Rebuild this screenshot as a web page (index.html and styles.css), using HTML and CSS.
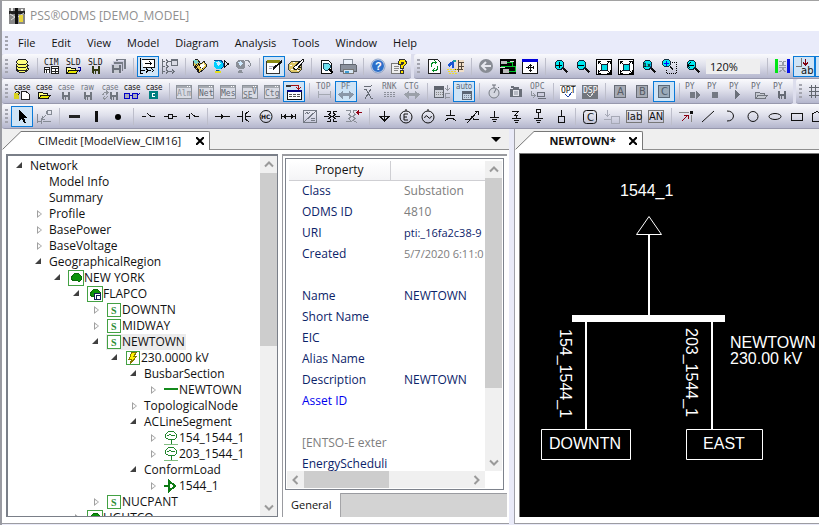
FILE: index.html
```html
<!DOCTYPE html>
<html lang="en">
<head>
<meta charset="utf-8">
<title>PSS®ODMS [DEMO_MODEL]</title>
<link rel="stylesheet" href="styles.css">
</head>
<body>
<svg class="sprite" aria-hidden="true">
  <symbol id="floppy" viewBox="0 0 8 8"><path d="M0 0H8V8H1L0 7Z" fill="currentColor"/><path d="M2 0H6V3H2Z" fill="#dfe0ea"/><path d="M2 5H6V8H2Z" fill="#c8c9d6"/><path d="M3 5H4V8H3Z" fill="currentColor"/></symbol>
  <symbol id="folder" viewBox="0 0 13 8"><path d="M.5 7V1.500H4.500L5.500 2.500H9.500V4" fill="#ffff80" stroke="currentColor"/><path d="M.5 7.500L3 4.500H12.500L10 7.500Z" fill="#e6e600" stroke="currentColor"/></symbol>
  <symbol id="folder-off" viewBox="0 0 13 8"><path d="M.5 7V1.500H4.500L5.500 2.500H9.500V4M.5 7.500L3 4.500H12.500L10 7.500Z" fill="#c4c8d0" stroke="#70757e"/></symbol>
  <symbol id="win" viewBox="0 0 16 14"><path d="M.5.5H15.500V13.500H.5Z" fill="#d9dbe4" stroke="#8e939b"/><path d="M1 1H15V3H1Z" fill="#a5a9b0"/><path d="M11 1h1v1h-1zM13 1h1v1h-1z" fill="#fff"/></symbol>
  <symbol id="lens" viewBox="0 0 13 14"><path d="M3.500 1.500H7.500L9.500 3.500V7.500L7.500 9.500H3.500L1.500 7.500V3.500Z" fill="#00e8f0" stroke="#123"/><path d="M9 9L12.500 12.500" stroke="#111" stroke-width="2"/></symbol>
  <symbol id="globe" viewBox="0 0 17 15"><path d="M3 1H8L10 3V8L8 10H3L1 8V3Z" fill="currentColor"/><path d="M3 3L6 2L8 5L5 7Z" fill="#cfeaff"/><path d="M4 11H7L8 14H3Z" fill="currentColor"/></symbol>
  <symbol id="fit" viewBox="0 0 16 16"><path d="M.5.5H15.500V15.500H.5Z" fill="#fff" stroke="#000"/><path d="M5 5H11V11H5Z" fill="#00dce6" stroke="#123"/><path d="M2 5V2H5M2 2L5 5M11 2H14V5M14 2L11 5M2 11V14H5M2 14L5 11M11 14H14V11M14 14L11 11" stroke="#000"/></symbol>
  <symbol id="line" viewBox="0 0 14 14"><path d="M0 13.500H14" stroke="#82bd82" stroke-width="2"/><path d="M4.500.5H9.500L12.500 3.500V6.500L10.500 8.500H4.500L1.500 6.500V3.500ZM7 9V13M3 5L6 3.500L8 5L11 4" fill="none" stroke="#20852b"/></symbol>
</svg>
<div class="app">
  <header class="titlebar">
    <svg class="logo" viewBox="0 0 16 16" aria-hidden="true"><path d="M0 0H16V16H0Z" fill="#898989"/><path d="M0 3H16V6H0Z" fill="#222"/><path d="M6 0H9V16H6Z" fill="#111"/><path d="M1 6L6 9M9 9L15 5M2 12L6 9" stroke="#ddd" fill="none"/><path d="M10 7H14V14H10Z" fill="#e8d53b"/><path d="M2 0H4V3H2ZM12 1H14V3H12Z" fill="#eee"/></svg>
    <span>PSS®ODMS [DEMO_MODEL]</span>
  </header>
  <nav class="menubar" aria-label="Main menu">
    <i class="grip"></i>
    <button>File</button><button>Edit</button><button>View</button><button>Model</button><button>Diagram</button><button>Analysis</button><button>Tools</button><button>Window</button><button>Help</button>
  </nav>

  <div class="toolrow">
    <div class="toolbar" role="toolbar" aria-label="Standard">
      <i class="grip"></i>
      <button aria-label="Database"><svg><path d="M5 12V14L8 16H14L17 14V12ZM5 9V10L8 12H14L17 10V9Z" fill="#ffff66" stroke="#222"/><ellipse cx="11" cy="12" rx="5.500" ry="2.500" fill="#ffff66" stroke="#222"/><ellipse cx="11" cy="9" rx="5.500" ry="2.500" fill="#ffff66" stroke="#222"/><ellipse cx="11" cy="6" rx="5.500" ry="2.500" fill="#ffff80" stroke="#222"/></svg></button>
      <i class="sep"></i>
      <button aria-label="CIM"><svg><text class="t8" x="3" y="9">CIM</text><path d="M3.500 17V11.500H8.500V17M10.500 17.500V10.500H17.500V17.500ZM10 12.500H17M10 15.500H17M14.500 13V17M4 13.500H8M5.500 14V17" fill="#fff" stroke="#222"/></svg></button>
      <button aria-label="Open SLD"><svg><text class="t8" x="3" y="9">SLD</text><use href="#folder" x="3" y="10" width="13" height="8"/><path d="M15 11H17.500V15M16 16L17.500 14" stroke="#00009a"/></svg></button>
      <button aria-label="Save SLD"><svg><text class="t8" x="3" y="9">SLD</text><g color="#333a12"><use href="#floppy" x="7" y="10" width="8" height="8"/></g></svg></button>
      <button aria-label="Save all" disabled><svg><path d="M9 3H19V13H9Z" fill="#777c86"/><path d="M11 4H17V5H11Z" fill="#dde"/><path d="M6.500 5.500H16.500V15.500H6.500Z" fill="#777c86" stroke="#ccd"/><path d="M4.500 8.500H14.500V17.500H4.500Z" fill="#6b707a" stroke="#ccd"/><path d="M7 9H12V12H7ZM7 14H12V17H7Z" fill="#c5c8d0"/></svg></button>
      <i class="sep"></i>
      <button class="on" aria-label="Model view"><svg><path d="M5 3.500H17.500V11.500H6" fill="#fff" stroke="#111"/><path d="M3.500 2V18" stroke="#000" stroke-width="1"/><path d="M8 7.500H14M12.500 5.500L14.500 7.500L12.500 9.500M4 14.500H8M9 12.500L11 14.500L9 16.500M12 14.500H14M14.500 12.500L16.500 14.500L14.500 16.500M4 17.500H6" stroke="#000"/></svg></button>
      <button aria-label="Model list" disabled><svg><path d="M12.500 3.500H18.500V9.500H12.500Z" fill="#d9dae4" stroke="#6b707a"/><path d="M3.500 3V18M4 5.500H6M7 3.500L9 5.500L7 7.500M9 5.500H12M4 10.500H6M7 8.500L9 10.500L7 12.500M4 15.500H6M7 13.500L9 15.500L7 17.500M10 15.500H13M13 13.500L15 15.500L13 17.500M12 4.500H18" stroke="#6b707a"/></svg></button>
      <i class="sep"></i>
      <button aria-label="Validate"><svg><path d="M4 5L8 3L12 8L15 5L18 10L14 14L10 17L5 10Z" fill="#e6c84e" stroke="#222"/><path d="M5 5L9 10M8 5L12 12M12 8L14 13M6 9L10 15" stroke="#111"/><path d="M4 4L8 4L10 7L6 8Z" fill="#79d5cb"/><path d="M11 9L15 7L16 10L12 13Z" fill="#fff"/></svg></button>
      <button aria-label="Locate"><svg color="#00cfff"><use href="#globe" x="2" y="3" width="17" height="15"/><path d="M3 4H10L12 7V11L10 13M5 14H8" stroke="#064a90"/><path d="M4 15H10V17H4Z" fill="#e3df20"/><path d="M13.500 5V11L17.500 8Z" stroke="#111"/></svg></button>
      <button aria-label="Relocate" disabled><svg color="#8a8f98"><use href="#globe" x="2" y="3" width="17" height="15"/><path d="M12 4H15L17 7V10M15 9L17 11" stroke="#858a93"/></svg></button>
      <i class="sep"></i>
      <button class="on" aria-label="Edit"><svg><path d="M3.500 5.500H16.500V17.500H3.500Z" fill="#fff" stroke="#333"/><path d="M4 4H17V7H4Z" fill="#8b8b12"/><path d="M10 13L19 5" stroke="#111" stroke-width="2"/><path d="M6 10.500H11M6 12.500H9" stroke="#aab"/></svg></button>
      <button aria-label="Palette"><svg><ellipse cx="10" cy="11" rx="7" ry="6" fill="#dfc765" stroke="#443"/><path d="M8 12L18 3L19 5L11 14Z" fill="#fff" stroke="#111"/><path d="M5 9H7V10H5ZM6 13H8V14H6ZM12 14H14V15H12ZM8 6H10V7H8Z" fill="#fff"/><path d="M13 11H16M13 13H15" stroke="#222"/></svg></button>
      <i class="sep"></i>
      <button aria-label="Print preview"><svg><path d="M6.500 4.500H13.500L16.500 7.500V17.500H6.500Z" fill="#fff" stroke="#111"/><path d="M9 7H13L15 9V12L13 14H10L8 12V9Z" fill="#6ee0ee" stroke="#174860"/><path d="M14 13L18 17" stroke="#000" stroke-width="2"/></svg></button>
      <button aria-label="Print"><svg><path d="M7 3H15L16 9H6Z" fill="#ecf2fa" stroke="#88909c"/><path d="M3 9L5 8H17L19 9V15H3Z" fill="#8b919c" stroke="#60656e"/><path d="M6 13H16V17H6Z" fill="#d8e8f5" stroke="#777"/><path d="M8 15H12V17H8Z" fill="#3f9ad0"/></svg></button>
      <i class="sep"></i>
      <button aria-label="Help"><svg class="smooth"><circle cx="11" cy="10" r="6.500" fill="#2c6fc9" stroke="#e4ecf8"/><circle cx="11" cy="10" r="7" stroke="#6b87b5" stroke-width=".7"/><text class="q" x="8" y="14" fill="#fff">?</text></svg></button>
      <button aria-label="Context help"><svg><path d="M2.500 7.500H13.500V17.500H2.500Z" fill="#eee" stroke="#777"/><path d="M5 10.500H10M5 12.500H10M5 14.500H9" stroke="#888"/><path d="M9.500 8V5.500L11 3.500H15.500L17 5.500V8L14.500 10.500V12.500H11.500V9.500L14 7.500V6.500H12.500V8Z" fill="#ffe600" stroke="#333"/><path d="M11.500 14.500H14.500V17H11.500Z" fill="#ffe600" stroke="#333"/></svg></button>
    </div>
    <div class="toolbar grow" role="toolbar" aria-label="View">
      <i class="grip"></i>
      <button aria-label="Refresh"><svg><path d="M5.500 3.500H14.500L17.500 6.500V17.500H5.500Z" fill="#fff" stroke="#222"/><path d="M8.500 11V8L10 6.500H13M11.500 4.500L13.500 6.500L11.500 8.500M14.500 10V13L13 14.500H10M11.500 12.500L9.500 14.500L11.500 16.500" stroke="#008b22"/></svg></button>
      <button aria-label="Synchronize"><svg><path d="M11 4H19V16H11Z" fill="#f1dfc8"/><path d="M13.500 4V16M13 6.500H19M13 10.500H19M16.500 7V13M10 13.500H18" stroke="#54483c"/><path d="M3 8L8 5H9V12H7V9L4 11Z" fill="#1755d2"/><path d="M8 4H11V6H8Z" fill="#17a0a0"/><path d="M2 13.500H12M3 15.500H11M4 17.500H12" stroke="#f0dc27" stroke-dasharray="2 1"/></svg></button>
      <i class="sep"></i>
      <button aria-label="Back" disabled><svg class="smooth"><circle cx="11" cy="10" r="7" fill="#888c94"/><path d="M16 10H7M11 6L7 10L11 14" stroke="#e6e7ee" stroke-width="2"/></svg></button>
      <button aria-label="Overview"><svg><path d="M3 3H19V18H3Z" fill="#050505"/><path d="M4 5H10V8H4ZM6 13H12V17H6Z" fill="#bbb"/><path d="M10 6.500H15.500V10M12 15.500H18.500V10H4" stroke="#00c92b"/><path d="M13 5.500H17M3 11.500H8" stroke="#ddd"/></svg></button>
      <button aria-label="Fit window"><svg><path d="M3.500 3.500H18.500V17.500H3.500Z" fill="#fff" stroke="#111"/><path d="M3 3H19V6H3Z" fill="#0000dc"/><path d="M7 11.500H15M11.500 8V16M9 10V13M14 10V13M10 9.500H13M10 14.500H13" stroke="#111"/></svg></button>
      <i class="sep"></i>
      <button aria-label="Zoom in"><svg><use href="#lens" x="4" y="3" width="15" height="15"/><path d="M7 9H13M10 6V12" stroke="#000" stroke-width="1"/></svg></button>
      <button aria-label="Zoom out"><svg><use href="#lens" x="4" y="3" width="15" height="15"/><path d="M7 9.500H13" stroke="#000"/></svg></button>
      <button aria-label="Zoom to fit"><svg><use href="#fit" x="3" y="3" width="16" height="16"/></svg></button>
      <button aria-label="Zoom extents"><svg><use href="#fit" x="3" y="3" width="16" height="16"/></svg></button>
      <button aria-label="Actual size"><svg><use href="#lens" x="4" y="3" width="15" height="15"/><text class="t6" x="6" y="11">1x</text></svg></button>
      <button aria-label="Zoom area"><svg><use href="#lens" x="2" y="2" width="13" height="13"/><path d="M5 7.500H10M7.500 5V10" stroke="#00f"/><path d="M13 6.500H17.500V17.500H7.500V14" stroke="#000" stroke-dasharray="1 1"/></svg></button>
      <button aria-label="Previous zoom"><svg><use href="#lens" x="4" y="3" width="15" height="15"/><path d="M7 9.500H13M9.500 6.500L7 9.500L9.500 12.500" stroke="#000"/></svg></button>
      <input class="zoom" aria-label="Zoom level" value="120%">
      <i class="sep wide"></i>
      <button aria-label="Compare" disabled><svg><path d="M4 3H7V17H4Z" fill="#00e515"/><path d="M16 3H19V17H16Z" fill="#0713e8"/><path d="M8 5L11 6V9H8M8 11H11V14L8 16M15 5L12 6V9H15M15 11H12V14L15 16" stroke="#969ba6"/></svg></button>
      <button class="on" aria-label="Labels"><svg><path d="M3 10.500H8.500V2" stroke="#777"/><path d="M12.500 3V9M10 6.500L12.500 9L15 6.500" stroke="#800010"/><text class="t10" x="8" y="18">ab</text></svg></button>
      <button class="on" aria-label="Values"><svg></svg></button>
    </div>
  </div>

  <div class="toolrow">
    <div class="toolbar" role="toolbar" aria-label="Cases">
      <i class="grip"></i>
      <button aria-label="New case"><svg><text class="case" x="3" y="9">case</text><path d="M3 12H8V18H3Z" fill="#d9d321"/><path d="M4 12L6 10L9 12L7 14" stroke="#222"/><path d="M10.500 10.500H15L18.500 13.500V18.500H10.500Z" fill="#fff" stroke="#222"/></svg></button>
      <button aria-label="Open case"><svg><text class="case" x="3" y="9">case</text><use href="#folder" x="5" y="10" width="13" height="8"/></svg></button>
      <button aria-label="Save case" disabled><svg color="#70757e"><text class="case" x="3" y="9">case</text><use href="#floppy" x="7" y="11" width="8" height="8"/></svg></button>
      <button aria-label="Save raw" disabled><svg color="#70757e"><text class="case" x="4" y="9">raw</text><use href="#floppy" x="7" y="11" width="8" height="8"/></svg></button>
      <button aria-label="Reload case" disabled><svg color="#70757e"><text class="case" x="3" y="9">case</text><use href="#floppy" x="11" y="11" width="8" height="8"/><path d="M3.500 14L5.500 11.500H8M7 9.500L9 11.500L7 13.500M9 15L7 17H4M6 15L4 17L6 19" stroke="#8f939b"/></svg></button>
      <button aria-label="View case"><svg><text class="case" x="3" y="9">case</text><circle cx="6" cy="15" r="3" fill="#aab" stroke="#0000c8"/><circle cx="14" cy="15" r="3" fill="#aab" stroke="#0000c8"/><path d="M9 14.500H11M17 14L19 12" stroke="#0000c8"/></svg></button>
      <button aria-label="Export case"><svg><text class="case" x="3" y="9">case</text><path d="M6 10H15V18H6Z" fill="#007f7f"/><path d="M12 12.500H9.500V15.500H12" stroke="#fff"/></svg></button>
      <i class="sep"></i>
      <button aria-label="Alarms" disabled><svg color="#8e939b"><use href="#win" x="3" y="4" width="16" height="14"/><text class="t8" x="4" y="15">Alm</text></svg></button>
      <button aria-label="Network"><svg color="#60656f"><use href="#win" x="3" y="4" width="16" height="14"/><text class="t8" x="4" y="15">Net</text></svg></button>
      <button aria-label="Messages"><svg color="#60656f"><use href="#win" x="3" y="4" width="16" height="14"/><text class="t8" x="4" y="15">Mes</text></svg></button>
      <button aria-label="State estimation" disabled><svg color="#70757e"><use href="#win" x="3" y="4" width="16" height="14"/><text class="t8" x="4" y="17">SE</text><text class="t8" x="13" y="13">V</text></svg></button>
      <button aria-label="Contingency"><svg color="#70757e"><use href="#win" x="3" y="4" width="16" height="14"/><text class="t8" x="4" y="15">Ctg</text></svg></button>
      <button class="on" aria-label="Results"><svg><path d="M4.500 9.500H18.500V18.500H4.500Z" fill="#fff" stroke="#111"/><path d="M4 9H19V11H4Z" fill="#000080"/><path d="M3 4H8V6H3Z" fill="#333"/><path d="M8 4.500H15.500V8M13 6L15.500 8.500L18 6" stroke="#a31010"/><path d="M6 13.500H17M6 15.500H17" stroke="#555" stroke-dasharray="3 1"/></svg></button>
      <i class="sep"></i>
      <button aria-label="Topology" disabled><svg color="#70757e"><text class="t8" x="3" y="8">TOP</text><path d="M5.500 10V17M17.500 10V17M6 13.500H17" stroke="#a4a8b2"/></svg></button>
      <button class="on" aria-label="Power flow" disabled><svg color="#70757e"><text class="t8" x="6" y="8">PF</text><path d="M3 13.500L8 10V12H14V10L19 13.500L14 18V15H8V18Z" fill="#8b98a9"/></svg></button>
      <button aria-label="State variable" disabled><svg><path d="M7 6L9 5L13 6L15 4M7 9L9 8L14 17L16 17M14 8L8 18" stroke="#666b75"/></svg></button>
      <button aria-label="Ranking" disabled><svg color="#70757e"><text class="t8" x="3" y="8">RNK</text><path d="M5 11.500H17M5 13.500H17M5 15.500H17" stroke="#8c909a" stroke-dasharray="2 1"/></svg></button>
      <button aria-label="Contingency analysis" disabled><svg color="#70757e"><text class="t8" x="3" y="8">CTG</text><path d="M3 13.500L8 10V12H14V10L19 13.500L14 18V15H8V18Z" fill="#9ba0a9"/></svg></button>
      <i class="sep"></i>
      <button aria-label="Load schedule" disabled><svg><path d="M3.500 5.500H12.500V16.500H3.500Z" fill="#ced1da" stroke="#5f646e"/><path d="M4 6H12V9H4Z" fill="#5f646e"/><path d="M5 11.500H12M5 13.500H12" stroke="#888" stroke-dasharray="1 1"/><path d="M16.500 4V9M14 7L16.500 9.500L19 7M14.500 12V18M14 12.500H19M14 16.500H19" stroke="#9296a0"/></svg></button>
      <button class="on" aria-label="Auto" disabled><svg color="#5b6673"><text class="case" x="3" y="8">auto</text><path d="M9.500 10.500H18.500V18.500H9.500Z" fill="#c5d4e2" stroke="#5b6673"/><path d="M9 10H19V13H9Z" fill="#5b6673"/><path d="M11 14.500H18M11 16.500H18" stroke="#789"  stroke-dasharray="1 1"/></svg></button>
      <i class="sep"></i>
      <button aria-label="Timer" disabled><svg class="smooth"><circle cx="11" cy="12" r="5" fill="#d5d7e0" stroke="#777c85"/><path d="M9 4H13M11 4V7M11 12L13 8M15 7L16 6" stroke="#6a6f79"/></svg></button>
      <button aria-label="Snapshot" disabled><svg><path d="M5 8H8L9 6H14V8H17V16H5Z" fill="#6a6f79"/><path d="M6 5H9V7H6Z" fill="#6a6f79"/><circle cx="11" cy="12" r="3" fill="#b7bac4" stroke="#e4e5ec"/></svg></button>
      <button aria-label="OPC" disabled><svg color="#70757e"><text class="t8" x="3" y="8">OPC</text><path d="M4.500 10V14.500H8M6 12L8.500 14.500L6 17" stroke="#8e939b"/><path d="M10.500 11.500H17.500V15.500H10.500ZM11 17.500H19" fill="#ccd" stroke="#6a6f79"/></svg></button>
      <i class="sep"></i>
      <button aria-label="OPT"><svg><path d="M3 4H19V18H3Z" fill="#fff"/><path d="M3 4H19V5H3Z" fill="#888"/><text class="t8" x="4" y="12">OPT</text><path d="M8 13L11 16L15 11" stroke="#2146a5"/></svg></button>
      <button aria-label="DSP" disabled><svg><path d="M3 4H19V18H3Z" fill="#72767e"/><text class="t8" x="4" y="12" fill="#fff">DSP</text><path d="M8 13L11 16L15 11" stroke="#ddd"/></svg></button>
      <i class="sep"></i>
      <button aria-label="A" disabled><svg color="#555a64"><path d="M5.500 4.500H16.500V16.500H5.500Z" fill="#a6aab4" stroke="#666b75"/><text class="t10" x="8" y="14">A</text></svg></button>
      <button aria-label="B" disabled><svg color="#555a64"><path d="M5.500 4.500H16.500V16.500H5.500Z" fill="#a6aab4" stroke="#666b75"/><text class="t10" x="8" y="14">B</text></svg></button>
      <button class="on" aria-label="C" disabled><svg color="#4e5c6b"><path d="M5.500 4.500H16.500V16.500H5.500Z" fill="#9cabb9" stroke="#596878"/><text class="t10" x="8" y="14">C</text></svg></button>
      <i class="sep"></i>
      <button aria-label="Python record" disabled><svg color="#666b75"><text class="t8" x="2" y="8">PY</text><path d="M7 11H12V17H7ZM13 10V18L17 14Z" fill="#747983"/></svg></button>
      <button aria-label="Python stop" disabled><svg color="#666b75"><text class="t8" x="2" y="8">PY</text><path d="M7 11H13V17H7Z" fill="#747983"/></svg></button>
      <button aria-label="Python run" disabled><svg color="#666b75"><text class="t8" x="2" y="8">PY</text><path d="M8 9V18L13 14Z" fill="#6a6f79"/></svg></button>
      <button aria-label="Python open" disabled><svg color="#666b75"><text class="t8" x="2" y="8">PY</text><use href="#folder-off" x="6" y="10" width="13" height="8"/></svg></button>
      <button aria-label="Python save" disabled><svg color="#666b75"><text class="t8" x="2" y="8">PY</text><use href="#floppy" x="7" y="10" width="8" height="8"/></svg></button>
    </div>
    <div class="toolbar grow" role="toolbar" aria-label="Grid">
      <i class="grip"></i>
      <button aria-label="Grid"><svg><path d="M4 6.500H18M4 10.500H18M4 14.500H18M6.500 4V17M10.500 4V17M14.500 4V17" stroke="#62666e"/></svg></button>
    </div>
  </div>

  <div class="toolrow">
    <div class="toolbar grow" role="toolbar" aria-label="Drawing">
      <i class="grip"></i>
      <button class="on" aria-label="Select"><svg><path d="M8 3V15L11 12.500L13 17H15L13 12H16Z" fill="#000"/></svg></button>
      <button aria-label="Select connected" disabled><svg><path d="M14.500 4.500H18.500V8.500H14.500ZM4.500 8V17M4 15.500H8M8.500 12V18M10 15.500H18M13.500 8V5M13 9L10 12M9 10V13H12" stroke="#858a94"/></svg></button>
      <i class="sep"></i>
      <button aria-label="Horizontal bus"><svg><path d="M6 9H17V12H6Z" fill="#222"/></svg></button>
      <button aria-label="Vertical bus"><svg><path d="M10 5H13V16H10Z" fill="#111"/></svg></button>
      <button aria-label="Node"><svg class="smooth"><circle cx="11" cy="11" r="3" fill="#000"/></svg></button>
      <i class="sep"></i>
      <button aria-label="Switch"><svg><path d="M5 10.500H9M10 7L14 10.500H18" stroke="#111"/></svg></button>
      <button aria-label="Breaker"><svg><path d="M5 10.500H9M9.500 8.500H13.500V12.500H9.500ZM14 10.500H18" stroke="#111"/></svg></button>
      <button aria-label="Load break switch"><svg><path d="M5 10.500H8.500M8.500 8V13M10 7L14 10.500H18" stroke="#111"/></svg></button>
      <i class="sep"></i>
      <button aria-label="Line"><svg><path d="M4 10.500H19" stroke="#111"/><path d="M10 8V13L14 10.500Z" fill="#111"/></svg></button>
      <button aria-label="Series capacitor"><svg><path d="M4 10.500H9.500V5M9.500 5V16M16 5L12.500 8V13L16 16M13 10.500H18" stroke="#111"/></svg></button>
      <button aria-label="HVDC converter"><svg class="smooth"><circle cx="11" cy="10.500" r="6" stroke="#111"/><text class="t6" x="6" y="13">HC</text></svg></button>
      <button aria-label="Jumper"><svg><path d="M4.500 8V13M18.500 8V13M5 10.500H18" stroke="#111"/><path d="M9 8V13L6 10.500ZM14 8V13L17 10.500Z" fill="#111"/></svg></button>
      <button aria-label="Converter" disabled><svg><path d="M4.500 4.500H17.500V16.500H4.500ZM4 17L18 4M6 8L8 6L9 8L11 6M12 12.500H16M12 14.500H16" stroke="#747984"/></svg></button>
      <button aria-label="Transformer"><svg><path d="M3 10.500H8M14 10.500H19M6 5.500H9L10 7L8 8.500L10 10.500L8 12.500L10 14L9 15.500H6M16 5.500H13L12 7L14 8.500L12 10.500L14 12.500L12 14L13 15.500H16" stroke="#111"/></svg></button>
      <button aria-label="Three-winding transformer"><svg><path d="M3 4.500H7L8 6L6 8.500L8 10.500L6 12.500L8 15.500L3 15.500M14 4.500H11L10 6L12 8.500L10 10.500L12 12.500L10 14.500L14 16.500" stroke="#8b8f98"/><path d="M19 6.500H14M16 4.500L14 6.500L16 8.500" stroke="#910014"/></svg></button>
      <i class="sep"></i>
      <button aria-label="Load"><svg><path d="M11.500 5V15M7 10.500H16L11.500 15Z" stroke="#111"/></svg></button>
      <button aria-label="Energy source"><svg class="smooth"><circle cx="11" cy="11" r="6" stroke="#111"/><path d="M11 3V5M13 8H9V14H13M9 11H12" stroke="#111"/></svg></button>
      <button aria-label="Generator"><svg class="smooth"><circle cx="11" cy="11" r="6" stroke="#111"/><path d="M11 3V5M7.500 12Q9 8 11 11T14.500 10" stroke="#111"/></svg></button>
      <button aria-label="Shunt"><svg><path d="M11.500 4V9.500M7 9.500H16M6 15L9 12.500H14L17 15" stroke="#111"/></svg></button>
      <button aria-label="Variable shunt"><svg><path d="M4 13.500H9L11 10.500L13 13.500H18M6 17L17 5M14 5.500H17.500V9" stroke="#111"/></svg></button>
      <button aria-label="Ground"><svg><path d="M11.500 5V11M7 11.500H16M9 13.500H14M10 15.500H13" stroke="#111"/></svg></button>
      <button aria-label="Ground switch"><svg><path d="M7 5.500H13L10 9.500H13M11.500 9V12M7 12.500H16M9 14.500H14M10 16.500H13" stroke="#111"/></svg></button>
      <button aria-label="Ground disconnector"><svg><path d="M9.500 3.500H13.500V6.500L9.500 6.500ZM11.500 6V12M7 12.500H16M9 14.500H14M10 16.500H13" stroke="#111"/></svg></button>
      <button aria-label="Terminal"><svg><path d="M12.500 4V11M9.500 10.500H15.500V16.500H9.500Z" stroke="#111"/></svg></button>
      <i class="sep"></i>
      <button aria-label="Container"><svg class="smooth"><rect x="4.500" y="4.500" width="13" height="13" rx="3" stroke="#111"/><text class="t10" x="8" y="15">C</text></svg></button>
      <button aria-label="Drop" disabled><svg><path d="M6.500 4V10M4 8L6.500 10.500L9 8M3 13.500H10M10.500 10.500H18.500V17.500H10.500Z" stroke="#a6a9b6"/></svg></button>
      <button aria-label="Label"><svg><path d="M3.500 4.500H18.500V16.500H3.500Z" stroke="#777"/><text class="t10" x="4" y="14">lab</text></svg></button>
      <button aria-label="Annotation"><svg><path d="M3.500 4.500H18.500V16.500H3.500Z" stroke="#777"/><text class="t10" x="4" y="14">AN</text></svg></button>
      <i class="sep"></i>
      <button aria-label="Link"><svg><path d="M4 6.500H14M16.500 9V16" stroke="#888"/><path d="M15 5H18V8H15Z" fill="#111"/><path d="M7 15L12.500 9.500M9 9.500H13V13" stroke="#8b0010"/></svg></button>
      <button aria-label="Draw line"><svg class="smooth"><path d="M5 16L17 5" stroke="#111"/></svg></button>
      <button aria-label="Draw arc"><svg class="smooth"><path d="M8 5Q14 5 14.500 10Q14 15 8 15" stroke="#111"/></svg></button>
      <button aria-label="Draw circle"><svg class="smooth"><circle cx="12" cy="10.500" r="5" stroke="#111"/></svg></button>
      <button aria-label="Draw ellipse"><svg class="smooth"><ellipse cx="12" cy="10.500" rx="6" ry="3" stroke="#111"/></svg></button>
      <button aria-label="Draw rectangle"><svg><path d="M6.500 7.500H17.500V14.500H6.500Z" stroke="#111"/></svg></button>
      <button aria-label="Draw polygon"><svg><path d="M5.500 15.500V8L10 5.500L16 9V15.500Z" stroke="#111"/></svg></button>
    </div>
  </div>

  <main class="work">
    <section class="doc model">
      <div class="tabs">
        <svg class="slant" viewBox="0 0 20 19" aria-hidden="true"><path d="M0 19L19 .5H20V19Z" fill="#fff"/><path d="M1 18L19 .5H20" fill="none" stroke="#777"/></svg>
        <div class="tab"><span>CIMedit [ModelView_CIM16]</span><button aria-label="Close tab"><svg viewBox="0 0 8 8"><path d="M0 0L8 8M8 0L0 8" stroke="#000" stroke-width="2"/></svg></button></div>
        <button class="more" aria-label="Window list"><svg viewBox="0 0 10 5"><path d="M0 0H10L5 5Z"/></svg></button>
      </div>
      <div class="page">
        <div class="treebox">
          <ul class="tree" aria-label="Model tree">
            <li><div><button class="open" aria-label="Collapse"></button>Network</div>
            <ul>
              <li><div><i class="leaf"></i>Model Info</div></li>
              <li><div><i class="leaf"></i>Summary</div></li>
              <li><div><button class="shut" aria-label="Expand"></button>Profile</div></li>
              <li><div><button class="shut" aria-label="Expand"></button>BasePower</div></li>
              <li><div><button class="shut" aria-label="Expand"></button>BaseVoltage</div></li>
              <li><div><button class="open" aria-label="Collapse"></button>GeographicalRegion</div>
              <ul>
                <li><div><button class="open" aria-label="Collapse"></button><svg class="ico" viewBox="0 0 16 16"><path d="M.5.5H15.500V15.500H.5Z" fill="#fff" stroke="#43a143"/><path d="M3 8L5 5L7 3H10L13 6V10L11 12L9 10L5 11Z" fill="#0a940a" stroke="#0a6a0a"/></svg>NEW YORK</div>
                <ul>
                  <li><div><button class="open" aria-label="Collapse"></button><svg class="ico" viewBox="0 0 16 16"><path d="M.5.5H15.500V15.500H.5Z" fill="#fff" stroke="#43a143"/><path d="M3 8L5 5L7 3H10L13 6V10L11 12L9 10L5 11Z" fill="#0a940a" stroke="#0a6a0a"/><path d="M7.500 7.500H13.500V13.500H7.500ZM9.500 9.500H13V13H9.500Z" fill="#fff" stroke="#102058"/></svg>FLAPCO</div>
                  <ul>
                    <li><div><button class="shut" aria-label="Expand"></button><svg class="ico" viewBox="0 0 16 16"><path d="M1.500 1.500H14.500V14.500H1.500Z" fill="#fff" stroke="#43a143"/><text class="s" x="5" y="12">S</text></svg>DOWNTN</div></li>
                    <li><div><button class="shut" aria-label="Expand"></button><svg class="ico" viewBox="0 0 16 16"><path d="M1.500 1.500H14.500V14.500H1.500Z" fill="#fff" stroke="#43a143"/><text class="s" x="5" y="12">S</text></svg>MIDWAY</div></li>
                    <li><div><button class="open" aria-label="Collapse"></button><span class="picked"><svg class="ico" viewBox="0 0 16 16"><path d="M1.500 1.500H14.500V14.500H1.500Z" fill="#fff" stroke="#43a143"/><text class="s" x="5" y="12">S</text></svg>NEWTOWN</span></div>
                    <ul>
                      <li><div><button class="open" aria-label="Collapse"></button><svg class="ico" viewBox="0 0 16 16"><path d="M1.500 1.500H14.500V14.500H1.500Z" fill="#fff" stroke="#43a143"/><path d="M7 2H12L9 6H12L5 14L7 9H4Z" fill="#fff200" stroke="#857a00"/></svg>230.0000 kV</div>
                      <ul>
                        <li><div><button class="open" aria-label="Collapse"></button>BusbarSection</div>
                          <ul><li><div><button class="shut" aria-label="Expand"></button><svg class="ico" viewBox="0 0 16 16"><path d="M1 7H15" stroke="#148a1c" stroke-width="2"/></svg>NEWTOWN</div></li></ul></li>
                        <li><div><button class="shut" aria-label="Expand"></button>TopologicalNode</div></li>
                        <li><div><button class="open" aria-label="Collapse"></button>ACLineSegment</div>
                          <ul>
                            <li><div><button class="shut" aria-label="Expand"></button><svg class="ico"><use href="#line" x="1" y="1" width="14" height="14"/></svg>154_1544_1</div></li>
                            <li><div><button class="shut" aria-label="Expand"></button><svg class="ico"><use href="#line" x="1" y="1" width="14" height="14"/></svg>203_1544_1</div></li>
                          </ul></li>
                        <li><div><button class="open" aria-label="Collapse"></button>ConformLoad</div>
                          <ul><li><div><button class="shut" aria-label="Expand"></button><svg class="ico" viewBox="0 0 16 16"><path d="M1 8H6M6 3V13L12 8Z" fill="#fff" stroke="#0d7a14" stroke-width="2"/></svg>1544_1</div></li></ul></li>
                      </ul></li>
                    </ul></li>
                    <li><div><button class="shut" aria-label="Expand"></button><svg class="ico" viewBox="0 0 16 16"><path d="M1.500 1.500H14.500V14.500H1.500Z" fill="#fff" stroke="#43a143"/><text class="s" x="5" y="12">S</text></svg>NUCPANT</div></li>
                  </ul></li>
                  <li><div><button class="shut" aria-label="Expand"></button><svg class="ico" viewBox="0 0 16 16"><path d="M.5.5H15.500V15.500H.5Z" fill="#fff" stroke="#43a143"/><path d="M3 8L5 5L7 3H10L13 6V10L11 12L9 10L5 11Z" fill="#0a940a" stroke="#0a6a0a"/></svg>LIGHTCO</div></li>
                </ul></li>
              </ul></li>
            </ul></li>
          </ul>
          <div class="vbar tree-bar"><button aria-label="Scroll up"><svg viewBox="0 0 8 5"><path d="M0 4.500L4 .5L8 4.500"/></svg></button><div><i></i></div><button aria-label="Scroll down"><svg viewBox="0 0 8 5"><path d="M0 .5L4 4.500L8 .5"/></svg></button></div>
        </div>
        <div class="props">
          <div class="propbox">
            <div class="list">
              <table>
                <thead><tr><th>Property</th><th></th></tr></thead>
                <tbody>
                  <tr><td>Class</td><td class="dim">Substation</td></tr>
                  <tr><td>ODMS ID</td><td class="dim">4810</td></tr>
                  <tr><td>URI</td><td class="long">pti:_16fa2c38-9</td></tr>
                  <tr><td>Created</td><td class="dim long">5/7/2020 6:11:0</td></tr>
                  <tr><td></td><td></td></tr>
                  <tr><td>Name</td><td>NEWTOWN</td></tr>
                  <tr><td>Short Name</td><td></td></tr>
                  <tr><td>EIC</td><td></td></tr>
                  <tr><td>Alias Name</td><td></td></tr>
                  <tr><td>Description</td><td>NEWTOWN</td></tr>
                  <tr><td class="link">Asset ID</td><td></td></tr>
                  <tr><td></td><td></td></tr>
                  <tr><td class="dim">[ENTSO-E exter</td><td></td></tr>
                  <tr><td>EnergyScheduli</td><td></td></tr>
                </tbody>
              </table>
            </div>
            <div class="vbar prop-bar"><button aria-label="Scroll up"><svg viewBox="0 0 8 5"><path d="M0 4.500L4 .5L8 4.500"/></svg></button><div><i></i></div><button aria-label="Scroll down"><svg viewBox="0 0 8 5"><path d="M0 .5L4 4.500L8 .5"/></svg></button></div>
            <div class="hbar"><button aria-label="Scroll left"><svg viewBox="0 0 5 8"><path d="M4.500 0L.5 4L4.500 8"/></svg></button><div><i></i></div><button aria-label="Scroll right"><svg viewBox="0 0 5 8"><path d="M.5 0L4.500 4L.5 8"/></svg></button></div>
          </div>
          <div class="subtabs"><button>General</button></div>
        </div>
      </div>
    </section>
    <section class="doc diagram">
      <div class="tabs">
        <svg class="slant" viewBox="0 0 20 19" aria-hidden="true"><path d="M0 19L19 .5H20V19Z" fill="#fff"/><path d="M1 18L19 .5H20" fill="none" stroke="#777"/></svg>
        <div class="tab strong"><span>NEWTOWN*</span><button aria-label="Close tab"><svg viewBox="0 0 8 8"><path d="M0 0L8 8M8 0L0 8" stroke="#000" stroke-width="2"/></svg></button></div>
      </div>
      <div class="canvas">
        <svg aria-label="NEWTOWN one-line diagram">
          <path d="M129 62.500L116.500 80.500H141.500Z"/>
          <path class="thick" d="M129 81V161M66 168V275M192 168V275"/>
          <path class="bus" d="M52 164.500H205"/>
          <path d="M21.500 275.500H110.500V305.500H21.500ZM166.500 275.500H242.500V305.500H166.500Z"/>
          <text x="100" y="42">1544_1</text>
          <text x="210" y="194">NEWTOWN</text>
          <text x="210" y="210">230.00 kV</text>
          <text x="65" y="295" text-anchor="middle">DOWNTN</text>
          <text x="204" y="295" text-anchor="middle">EAST</text>
          <text transform="translate(40 175) rotate(90)">154_1544_1</text>
          <text transform="translate(166 174) rotate(90)">203_1544_1</text>
        </svg>
      </div>
    </section>
  </main>
</div>
</body>
</html>
```
FILE: styles.css
```css
* { box-sizing: border-box; }
body {
  margin: 0;
  height: 100vh;
  overflow: hidden;
  background: #e9eaf8;
  color: #111;
  font: 12px/16px "Open Sans", "Noto Sans", sans-serif;
}
button {
  margin: 0;
  padding: 0;
  border: 0;
  background: none;
  color: inherit;
  font: inherit;
}
.sprite { position: absolute; width: 0; height: 0; }
.app {
  display: flex;
  flex-direction: column;
  height: 100%;
  border-top: 1px solid #a2a2a2;
  border-left: 2px solid #9a9ba2;
}

.titlebar {
  display: flex;
  align-items: center;
  gap: 5px;
  height: 30px;
  padding-left: 7px;
  background: #fff;
  color: #8f8f8f;
}
.logo { width: 16px; height: 16px; }

.menubar {
  display: flex;
  align-items: center;
  height: 23px;
  padding-left: 3px;
  background: #e9ebfa;
  font-size: 11px;
}
.menubar .grip { margin-right: 2px; }
.menubar button { padding: 0 8px; }

.grip {
  flex: none;
  width: 3px;
  height: 14px;
  margin-right: 3px;
  background: repeating-linear-gradient(#a3a4ae 0 2px, transparent 2px 4px);
}

.toolrow { display: flex; gap: 3px; background: #dddeed; }
.toolbar {
  display: flex;
  flex: none;
  align-items: center;
  height: 25px;
  padding-left: 3px;
  border-bottom: 1px solid #9798ad;
  border-radius: 3px 0 3px 3px;
  background: linear-gradient(#fafafd, #e0e1ec 45%, #b4b6cd);
}
.toolbar.grow { flex: 1 0 0; }
.toolbar button { flex: none; width: 22px; height: 21px; }
.toolbar svg {
  display: block;
  width: 22px;
  height: 21px;
  overflow: visible;
  fill: none;
  shape-rendering: crispEdges;
}
.toolbar svg.smooth { shape-rendering: auto; }
.toolbar .on { background: #cfe4f6; outline: 1px solid #0a7ad8; outline-offset: -1px; }
.toolbar text { fill: currentColor; }
.toolbar button:disabled { color: #70757e; }
.toolbar text[fill] { fill: #fff; }
.t8 { font: 8px "DejaVu Sans Mono", monospace; }
.t6 { font: bold 6px "DejaVu Sans", sans-serif; }
.t10 { font: 10px "DejaVu Sans", sans-serif; }
.case { font: 8px "DejaVu Sans Condensed", "DejaVu Sans", sans-serif; }
.q { font: bold 11px "Liberation Sans", sans-serif; }
.sep {
  flex: none;
  width: 1px;
  height: 17px;
  margin: 0 3px 0 4px;
  background: #bdbecb;
}
.sep.wide { margin: 0 3px 0 7px; }
.zoom {
  width: 54px;
  height: 15px;
  margin-left: 3px;
  padding: 0 4px;
  border: 0;
  background: #eeeeef;
  color: #111;
  font: 11px/15px "Open Sans", "Noto Sans", sans-serif;
}

.work { display: flex; flex: 1; min-height: 0; padding-bottom: 1px; }
.doc {
  display: flex;
  flex-direction: column;
  min-width: 0;
  border-bottom: 1px solid #9c9ca2;
  background: #fff;
}
.model { flex: 508 1 0; margin-right: 5px; }
.diagram { flex: 304 1 0; border-left: 1px solid #a0a0a8; }
.tabs {
  display: flex;
  align-items: flex-end;
  flex: none;
  height: 21px;
  border-bottom: 1px solid #8f8f8f;
  background: #efefef;
  font-size: 11px;
}
.slant { flex: none; width: 20px; height: 19px; margin-bottom: -1px; }
.tab {
  display: flex;
  align-items: center;
  height: 19px;
  margin-bottom: -1px;
  padding: 0 4px 0 16px;
  gap: 14px;
  border-top: 1px solid #777;
  border-right: 1px solid #777;
  border-radius: 0 2px 0 0;
  background: #fff;
}
.tab.strong { gap: 12px; padding-left: 14px; font-weight: 700; }
.tab button, .more { display: flex; align-items: center; justify-content: center; width: 10px; height: 16px; }
.tab button svg { width: 8px; height: 8px; }
.more { margin: 0 8px 2px auto; }
.more svg { width: 10px; height: 5px; }

.page { display: flex; flex: 1; gap: 4px; min-height: 0; padding: 4px 2px 6px 4px; }
.treebox {
  display: flex;
  flex: 271 1 0;
  min-width: 0;
  border: solid #7a7f88;
  border-width: 2px 1px 1px 2px;
  overflow: hidden;
}
.tree { flex: 1; min-width: 0; overflow: hidden; padding: 2px 0 0 6px; }
.tree, .tree ul { margin: 0; list-style: none; }
.tree ul { padding-left: 19px; }
.tree div { display: flex; align-items: center; height: 16px; white-space: nowrap; }
.tree button, .leaf { position: relative; flex: none; width: 12px; height: 12px; margin-right: 4px; }
.open::before {
  content: "";
  position: absolute;
  inset: 2px 4px 4px 2px;
  background: #404040;
  clip-path: polygon(100% 0, 100% 100%, 0 100%);
}
.shut::before {
  content: "";
  position: absolute;
  inset: 2px 3px 2px 4px;
  background: #a0a0a0;
  clip-path: polygon(0 0, 100% 50%, 0 100%, 0 0, 1px 2px, 1px 6px, 4px 4px, 1px 2px);
}
.ico { flex: none; width: 16px; height: 16px; shape-rendering: crispEdges; }
.s { font: bold 10px "Liberation Serif", serif; fill: #2d8c35; }
.picked { display: flex; background: #ececec; padding-right: 1px; }

.vbar { display: flex; flex: none; flex-direction: column; width: 17px; background: #f0f0f0; }
.vbar > div, .hbar > div { display: flex; flex: 1; min-width: 0; min-height: 0; }
.vbar > div { flex-direction: column; }
.vbar i, .hbar i { background: #cdcdcd; }
.vbar button, .hbar button { display: flex; flex: none; align-items: center; justify-content: center; width: 17px; height: 17px; }
.vbar svg { width: 8px; height: 5px; overflow: visible; }
.hbar svg { width: 5px; height: 8px; overflow: visible; }
.vbar path, .hbar path { fill: none; stroke: #9a9a9a; stroke-width: 2; }
.tree-bar i { height: 53%; }
.prop-bar i { height: 76%; }
.hbar { display: flex; height: 17px; background: #f0f0f0; }
.hbar i { width: 52%; }

.props {
  display: flex;
  flex: 226 1 0;
  flex-direction: column;
  min-width: 0;
  border: solid #9a9ba0;
  border-width: 2px 0 0 1px;
}
.propbox {
  display: grid;
  flex: 1;
  grid-template-columns: minmax(0, 1fr) 17px;
  grid-template-rows: minmax(0, 1fr) 17px;
  min-height: 0;
  margin: 2px 3px 3px 2px;
  padding: 2px 1px 1px;
  border: 1px solid #7d828c;
}
.list { overflow: hidden; padding-left: 2px; }
.list table { width: 100%; border-collapse: collapse; table-layout: fixed; color: #0b2369; }
.list th {
  height: 19px;
  padding: 0;
  border-bottom: 1px solid #cfcfd3;
  background: linear-gradient(#fff, #f4f4f6);
  color: #111;
  font-weight: 400;
}
.list th:first-child { width: 101px; border-right: 1px solid #cfcfd3; }
.list td { height: 21px; padding: 0 0 0 13px; white-space: nowrap; overflow: hidden; }
.list td + td { padding-left: 14px; }
.list .long { font-size: 11px; }
.list .dim { color: #7d7d7d; }
.list .link { color: #0000ee; }
.subtabs { display: flex; flex: none; height: 24px; border-top: 1px solid #9a9ba0; background: #d3d3d3; font-size: 11px; }
.subtabs button { margin-top: -1px; padding: 0 8px; border-right: 1px solid #a5a5a8; background: #fff; }

.canvas {
  flex: 1;
  min-height: 0;
  margin: 3px 0 6px 4px;
  border: solid #777;
  border-width: 1px 0 0 1px;
  background: #000;
}
.canvas svg { display: block; width: 100%; height: 100%; }
.canvas path { fill: none; stroke: #fff; }
.canvas .thick { stroke-width: 2; }
.canvas .bus { stroke-width: 7; }
.canvas text { fill: #fff; font: 16px "Liberation Sans", Arial, sans-serif; }
```
